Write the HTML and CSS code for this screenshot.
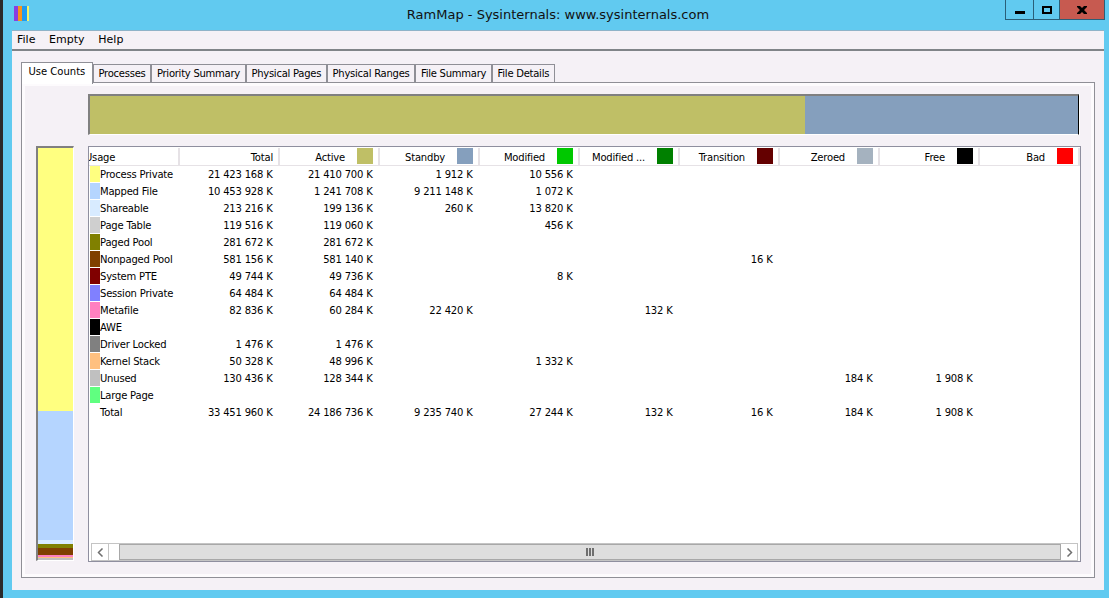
FILE: index.html
```html
<!DOCTYPE html>
<html lang="en">
<head>
  <meta charset="UTF-8" />
  <title>RamMap - Sysinternals: www.sysinternals.com</title>
  <link rel="stylesheet" href="styles.css">
</head>
<body>
  <div class="desktop-edge"></div>
  <div class="window">
    <div class="titlebar">
      <svg class="app-icon" width="16" height="16" viewBox="0 0 16 16">
        <rect x="0" y="0" width="4" height="15" fill="#8a3fe0" />
        <rect x="4" y="0" width="4" height="15" fill="#f7941d" />
        <rect x="8" y="0" width="5" height="15" fill="#1e9bf0" />
        <rect x="13" y="0" width="2" height="15" fill="#f2f26a" />
      </svg>
      <div class="title">RamMap - Sysinternals: www.sysinternals.com</div>
      <div class="controls">
        <div class="ctl ctl-min"><span class="min-glyph"></span></div>
        <div class="ctl ctl-max"><span class="max-glyph"></span></div>
        <div class="ctl ctl-close">
          <svg width="10" height="8" viewBox="0 0 10 8">
            <path d="M0 0h3l2 2 2-2h3v1L7 4l3 3v1H7L5 6 3 8H0V7l3-3-3-3z" fill="#000" />
          </svg>
        </div>
      </div>
    </div>

    <div class="client">
      <div class="menubar">
        <span>File</span>
        <span>Empty</span>
        <span>Help</span>
      </div>

      <div class="tab-area">
        <div class="tabs">
          <div class="tab active">Use Counts</div>
          <div class="tab">Processes</div>
          <div class="tab">Priority Summary</div>
          <div class="tab">Physical Pages</div>
          <div class="tab">Physical Ranges</div>
          <div class="tab">File Summary</div>
          <div class="tab">File Details</div>
        </div>

        <div class="panel">
          <div class="side-col">
            <div class="side-bar">
              <div style="height:263px;background:#ffff80"></div>
              <div style="height:129px;background:#b5d5ff"></div>
              <div style="height:4px;background:#d8ebff"></div>
              <div style="height:4px;background:#808000"></div>
              <div style="height:7px;background:#804000"></div>
              <div style="height:2px;background:#ff80c0"></div>
              <div style="height:1px;background:#ffc080"></div>
              <div style="height:2px;background:#c0c0c0"></div>
            </div>
          </div>

          <div class="main-col">
            <div class="top-bar">
              <div class="seg-active"></div>
              <div class="seg-standby"></div>
            </div>

            <div class="list">
              <table class="grid">
                <thead>
                  <tr>
                    <th class="usage"><div class="usage-clip"><span>Usage</span></div></th>
                    <th><div class="hd">Total</div></th>
                    <th><div class="hd">Active<i style="background:#bfbf66"></i></div></th>
                    <th><div class="hd">Standby<i style="background:#859fbd"></i></div></th>
                    <th><div class="hd">Modified<i style="background:#00c800"></i></div></th>
                    <th><div class="hd">Modified ...<i style="background:#008000"></i></div></th>
                    <th><div class="hd">Transition<i style="background:#640000"></i></div></th>
                    <th><div class="hd">Zeroed<i style="background:#a5b2bf"></i></div></th>
                    <th><div class="hd">Free<i style="background:#000"></i></div></th>
                    <th><div class="hd">Bad<i style="background:#f00"></i></div></th>
                  </tr>
                </thead>
                <tbody id="rows"></tbody>
              </table>

              <div class="hscroll">
                <div class="sb-btn">
                  <svg width="7" height="9" viewBox="0 0 7 9"><path d="M5.5 0.5 1.5 4.5 5.5 8.5" fill="none" stroke="#6f6f6f" stroke-width="1.5" /></svg>
                </div>
                <div class="sb-gap"></div>
                <div class="sb-thumb"><span class="grip"></span></div>
                <div class="sb-btn">
                  <svg width="7" height="9" viewBox="0 0 7 9"><path d="M1.5 0.5 5.5 4.5 1.5 8.5" fill="none" stroke="#6f6f6f" stroke-width="1.5" /></svg>
                </div>
              </div>
            </div>
          </div>
        </div>
      </div>
    </div>
  </div>

  <script>
    const data = [
      ['#ffff80', 'Process Private', '21 423 168 K', '21 410 700 K', '1 912 K', '10 556 K'],
      ['#b5d5ff', 'Mapped File', '10 453 928 K', '1 241 708 K', '9 211 148 K', '1 072 K'],
      ['#d8ebff', 'Shareable', '213 216 K', '199 136 K', '260 K', '13 820 K'],
      ['#cfcfcf', 'Page Table', '119 516 K', '119 060 K', '', '456 K'],
      ['#808000', 'Paged Pool', '281 672 K', '281 672 K'],
      ['#804000', 'Nonpaged Pool', '581 156 K', '581 140 K', '', '', '', '16 K'],
      ['#800000', 'System PTE', '49 744 K', '49 736 K', '', '8 K'],
      ['#8080ff', 'Session Private', '64 484 K', '64 484 K'],
      ['#ff80c0', 'Metafile', '82 836 K', '60 284 K', '22 420 K', '', '132 K'],
      ['#000000', 'AWE'],
      ['#808080', 'Driver Locked', '1 476 K', '1 476 K'],
      ['#ffc080', 'Kernel Stack', '50 328 K', '48 996 K', '', '1 332 K'],
      ['#c0c0c0', 'Unused', '130 436 K', '128 344 K', '', '', '', '', '184 K', '1 908 K'],
      ['#60ff80', 'Large Page'],
      ['', 'Total', '33 451 960 K', '24 186 736 K', '9 235 740 K', '27 244 K', '132 K', '16 K', '184 K', '1 908 K']
    ];

    const rows = document.getElementById('rows');
    data.forEach((row) => {
      const tr = document.createElement('tr');
      let html = '<td class="name"><i style="background:' + (row[0] || 'transparent') + '"></i>' + row[1] + '</td>';
      for (let i = 2; i < 11; i++) {
        html += '<td>' + (row[i] || '') + '</td>';
      }
      tr.innerHTML = html;
      rows.appendChild(tr);
    });
  </script>
</body>
</html>
```

FILE: styles.css
```css
* {
  margin: 0;
  padding: 0;
  box-sizing: border-box;
}

body {
  display: flex;
  width: 1109px;
  height: 598px;
  overflow: hidden;
  font-family: "DejaVu Sans", "Liberation Sans", sans-serif;
  font-size: 10px;
  color: #000;
  background: #61caf0;
}

.desktop-edge {
  width: 4px;
  background: #2b2b2b;
}

.window {
  flex: 1;
  display: flex;
  flex-direction: column;
  padding: 0 5px 8px 9px;
  background: #61caf0;
}

.titlebar {
  position: relative;
  height: 30px;
  flex: none;
  text-align: center;
  font-size: 13px;
  line-height: 30px;
}

.title {
  color: #111;
}

.app-icon {
  position: absolute;
  left: 2px;
  top: 6px;
}

.controls {
  position: absolute;
  right: -1px;
  top: 0;
  display: flex;
  height: 20px;
  border: 1px solid #2a5f78;
  border-top: none;
}

.ctl {
  display: flex;
  align-items: center;
  justify-content: center;
  height: 19px;
}

.ctl-min {
  width: 28px;
  border-right: 1px solid #2a5f78;
}

.ctl-max {
  width: 26px;
  border-right: 1px solid #2a5f78;
}

.ctl-close {
  width: 44px;
  background: #c75a50;
}

.min-glyph {
  width: 10px;
  height: 3px;
  margin-top: 5px;
  background: #000;
}

.max-glyph {
  width: 10px;
  height: 8px;
  border: 2px solid #000;
}

.client {
  flex: 1;
  display: flex;
  flex-direction: column;
  border-top: 1px solid #8fb3c8;
  background: #f5f1f6;
}

.menubar {
  display: flex;
  gap: 13.7px;
  height: 20px;
  flex: none;
  padding-left: 5px;
  font-size: 11px;
  line-height: 17px;
  border-bottom: 2px solid #808488;
}

.tab-area {
  flex: 1;
  display: flex;
  flex-direction: column;
  padding: 10px 9px 12px 9px;
}

.tabs {
  position: relative;
  z-index: 1;
  display: flex;
  align-items: flex-end;
  height: 23px;
  flex: none;
  margin-bottom: -2px;
}

.tab {
  height: 18px;
  margin-bottom: 2px;
  padding: 0 4.7px;
  line-height: 18px;
  letter-spacing: -0.25px;
  white-space: nowrap;
  background: #f5f1f6;
  border: 1px solid #8f8f96;
  border-bottom: none;
}

.tab.active {
  height: 22px;
  margin-bottom: 0;
  padding: 0 6.5px;
  line-height: 18px;
  letter-spacing: 0;
  background: #fff;
}

.panel {
  flex: 1;
  display: flex;
  border: 1px solid #8f8f96;
  padding: 11px 13px 14px 14px;
  background: #f5f1f6;
  box-shadow: inset 0 0 0 3px #fdfbfd;
}

.side-col {
  width: 52px;
  flex: none;
  padding-top: 52px;
}

.side-bar {
  width: 38px;
  height: 415px;
  overflow: hidden;
  border-top: 2px solid #808080;
  border-left: 2px solid #808080;
  border-right: 1px solid #fff;
  border-bottom: 1px solid #fff;
}

.main-col {
  flex: 1;
  display: flex;
  flex-direction: column;
}

.top-bar {
  display: flex;
  height: 41px;
  flex: none;
  margin-right: 2px;
  border-top: 2px solid #808080;
  border-left: 2px solid #808080;
  border-right: 1px solid #000;
  border-bottom: 1px solid #fff;
  box-shadow: 1px 0 0 #fff;
}

.seg-active {
  width: 715px;
  background: #bfbf66;
}

.seg-standby {
  flex: 1;
  background: #859fbd;
}

.list {
  display: flex;
  flex-direction: column;
  height: 416px;
  flex: none;
  margin-top: 11px;
  border: 1px solid #8f8f9f;
  background: #fff;
}

.grid {
  flex: none;
  width: 990px;
  margin-top: 1px;
  border-collapse: collapse;
  table-layout: fixed;
  letter-spacing: -0.2px;
}

.grid th {
  width: 100px;
  height: 17px;
  padding: 0;
  font-weight: normal;
  vertical-align: top;
  background: #fff;
  border-bottom: 1px solid #e6e2e6;
  border-right: 2px solid #e6e2e6;
}

.grid th.usage {
  width: 90px;
  text-align: left;
}

.usage-clip {
  width: 88px;
  height: 16px;
  overflow: hidden;
  line-height: 20px;
  white-space: nowrap;
}

.usage-clip span {
  display: inline-block;
  margin-left: -4px;
}

.hd {
  display: flex;
  align-items: flex-start;
  justify-content: flex-end;
  height: 16px;
  padding-right: 5px;
  line-height: 20px;
  white-space: nowrap;
}

.hd i {
  width: 16px;
  height: 16px;
  margin-left: 12px;
}

.grid td {
  height: 17px;
  padding: 0 6.5px 0 0;
  text-align: right;
  white-space: nowrap;
  line-height: 15px;
}

.grid td.name {
  display: flex;
  align-items: center;
  padding: 0 0 0 1px;
  text-align: left;
}

.grid td.name i {
  align-self: flex-start;
  width: 10px;
  height: 16px;
  flex: none;
}

.hscroll {
  display: flex;
  height: 18px;
  flex: none;
  margin: auto 2px 0 2px;
  background: #fff;
  border: 1px solid #c4c4c4;
}

.sb-btn {
  display: flex;
  align-items: center;
  justify-content: center;
  width: 16px;
  flex: none;
  background: #fff;
}

.sb-gap {
  width: 12px;
  flex: none;
  border-left: 1px solid #c4c4c4;
  border-right: 1px solid #a8a8a8;
}

.sb-thumb {
  flex: 1;
  display: flex;
  align-items: center;
  justify-content: center;
  background: #dedede;
  border-top: 1px solid #a8a8a8;
  border-bottom: 1px solid #a8a8a8;
  border-right: 1px solid #a8a8a8;
}

.grip {
  width: 8px;
  height: 8px;
  background: repeating-linear-gradient(90deg, #6f6f6f 0, #6f6f6f 2px, transparent 2px, transparent 3px);
}
```
